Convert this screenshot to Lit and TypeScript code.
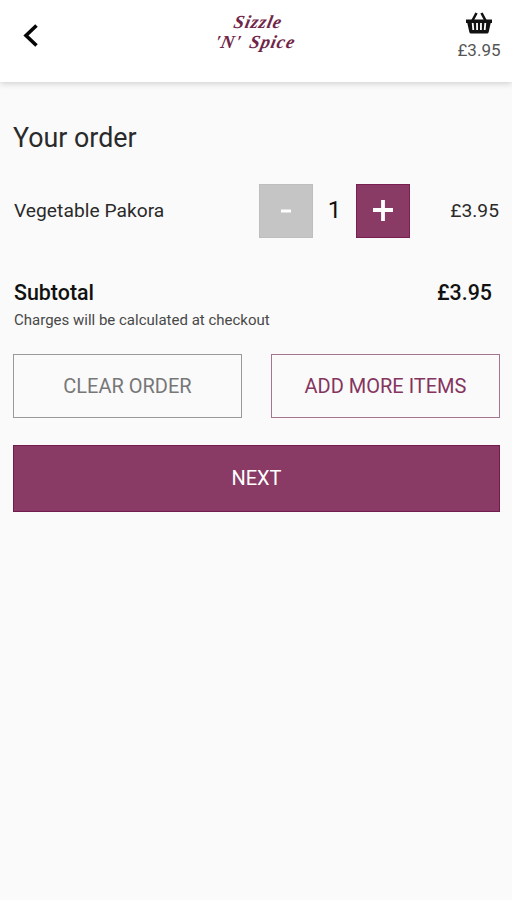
import { LitElement, html, css } from "lit";
import { customElement, state } from "lit/decorators.js";

@customElement("app-root")
export class AppRoot extends LitElement {
  @state() private quantity = 1;
  private readonly unitPrice = 3.95;

  static styles = css`
    :host {
      display: block;
      min-height: 900px;
      background: #fafafa;
      color: #2a2a2a;
      font-family: Roboto, "Liberation Sans", sans-serif;
    }
    * { box-sizing: border-box; }
    .header {
      height: 82px;
      background: #fff;
      box-shadow: 0 1px 7px rgba(0, 0, 0, 0.2);
      display: grid;
      grid-template-columns: 1fr 90px 1fr;
      align-items: start;
    }
    .back { display: block; margin: 23px 0 0 22px; }
    .logo {
      margin: 12px 0 0;
      font: italic bold 18.5px/20px "Liberation Serif", serif;
      color: #702648;
      transform: skewX(-12deg);
      white-space: nowrap;
    }
    .logo span { display: block; }
    .first { padding-left: 21px; letter-spacing: 0.8px; }
    .second { padding-left: 6px; letter-spacing: 0.9px; word-spacing: 3px; }
    .basket {
      display: flex;
      flex-direction: column;
      align-items: center;
      justify-self: end;
      width: 66px;
      padding-top: 12px;
      font-size: 17px;
      line-height: 20px;
      color: #555;
    }
    .basket svg { display: block; margin-bottom: 6px; }
    .content { padding: 38px 12px 0 13px; }
    h1 { margin: 0; font-size: 26.8px; line-height: 36px; font-weight: 400; height: 64px; }
    .item {
      display: grid;
      grid-template-columns: 246px 54px 43px 54px 1fr;
      height: 54px;
      align-items: center;
      font-size: 19.2px;
      letter-spacing: 0.04px;
    }
    .name { padding: 0 0 2px 1px; }
    .step {
      height: 54px;
      padding: 0;
      border: 1px solid #7a1f52;
      background: #8a3b65;
      display: grid;
      place-items: center;
    }
    .step:disabled { background: #c5c5c5; border-color: #bebebe; }
    .count { text-align: center; font-size: 24px; color: #111; padding-bottom: 2px; }
    .price { text-align: right; padding: 0 1px 2px 0; }
    .subtotal {
      display: flex;
      justify-content: space-between;
      margin-top: 42px;
      padding: 0 8px 0 1px;
      font-size: 21.4px;
      line-height: 26px;
      font-weight: 500;
      color: #111;
    }
    .note { padding: 4px 0 0 1px; font-size: 15px; line-height: 20px; color: #484848; }
    .actions { display: grid; grid-template-columns: 1fr 1fr; gap: 29px; margin-top: 24px; }
    .button {
      height: 64px;
      padding: 0;
      border: 1px solid #999;
      background: transparent;
      font: 400 20px/24px Roboto, "Liberation Sans", sans-serif;
      color: #777;
    }
    .button.accent { border-color: #a5748e; color: #85345f; }
    .button.next {
      width: 100%;
      height: 67px;
      margin-top: 27px;
      padding-bottom: 2px;
      display: block;
      border-color: #741b4d;
      background: #8a3b65;
      color: #fff;
    }
  `;

  private money(value: number) {
    return "£" + value.toFixed(2);
  }

  render() {
    const total = this.money(this.unitPrice * this.quantity);
    return html`
      <header class="header">
        <svg class="back" width="18" height="25" viewBox="0 0 18 25" fill="none" stroke="#050505" stroke-width="3.6">
          <path d="M14.500 2.500 4 12.500l10.500 10" />
        </svg>
        <div class="logo"><span class="first">Sizzle</span><span class="second">'N' Spice</span></div>
        <div class="basket">
          <svg width="28" height="22" viewBox="0 0 28 22" fill="none" stroke="#111">
            <path d="M11.500 1 7.500 8.500M16.500 1l4 7.500" stroke-width="2.600" />
            <path d="M1 7.500h26v3.500h-1.300L23.700 20q-.3 1.500-1.800 1.500H6.100q-1.500 0-1.800-1.500L2.300 11H1z" fill="#111" stroke="none" />
            <path d="M7.700 11l.6 7M12 11l.1 7M16 11l-.1 7M20.300 11l-.6 7" stroke="#fff" stroke-width="1.800" />
          </svg>
          <span class="total">${total}</span>
        </div>
      </header>
      <main class="content">
        <h1>Your order</h1>
        <div class="item">
          <span class="name">Vegetable Pakora</span>
          <button class="step" aria-label="Remove one" ?disabled=${this.quantity <= 1} @click=${() => this.quantity--}>
            <svg width="22" height="22" viewBox="0 0 22 22"><path d="M6 11h10" stroke="#fff" stroke-width="3" /></svg>
          </button>
          <span class="count">${this.quantity}</span>
          <button class="step" aria-label="Add one" @click=${() => this.quantity++}>
            <svg width="22" height="22" viewBox="0 0 22 22"><path d="M1 10h20M11 0v21" stroke="#fff" stroke-width="3.800" /></svg>
          </button>
          <span class="price">${total}</span>
        </div>
        <div class="subtotal"><span>Subtotal</span><span>${total}</span></div>
        <div class="note">Charges will be calculated at checkout</div>
        <div class="actions">
          <button class="button">CLEAR ORDER</button>
          <button class="button accent">ADD MORE ITEMS</button>
        </div>
        <button class="button next">NEXT</button>
      </main>
    `;
  }
}
